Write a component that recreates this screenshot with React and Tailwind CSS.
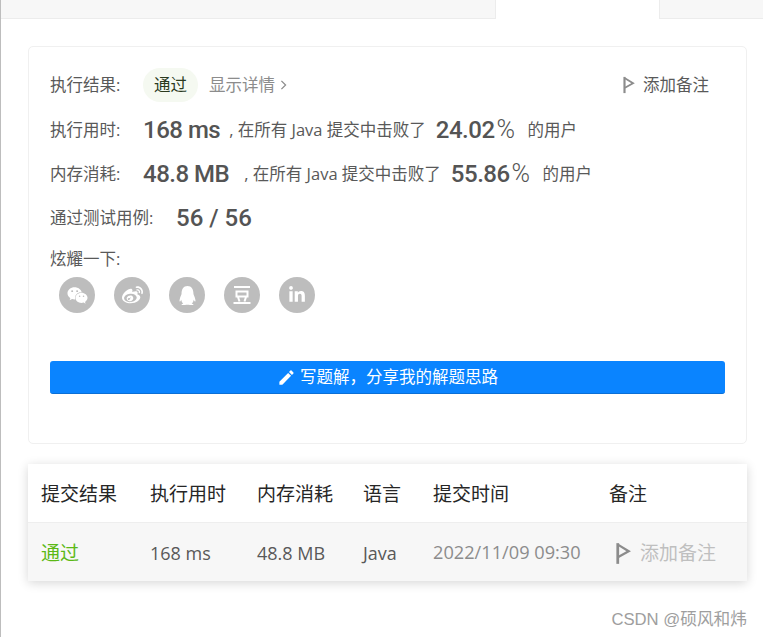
import { FaWeixin, FaWeibo, FaQq, FaLinkedinIn } from 'react-icons/fa';
import { MdEdit } from 'react-icons/md';

const cjk = { fontFamily: '"Open Sans", "Noto Sans CJK SC", sans-serif' };
const din = { fontFamily: 'Roboto, sans-serif' };
const cols = 'grid grid-cols-[109px_107px_106px_70px_176px_1fr]';

function Flag({ className }) {
  return (
    <svg viewBox="0 0 14 20" className={className} fill="none" stroke="currentColor">
      <path d="M2 1v18" strokeWidth="2.4" />
      <path d="M2.5 2.5 L11.5 8 L2.5 13" strokeWidth="2" strokeLinejoin="miter" />
    </svg>
  );
}

function Douban() {
  return (
    <svg viewBox="0 0 20 20" className="w-[20px] h-[20px]" fill="none" stroke="currentColor" strokeWidth="2">
      <path d="M2 2h16M4.500 6.500h11v5h-11zM6 12l1.500 4.500M14 12l-1.500 4.500M1.500 18h17" />
    </svg>
  );
}

function Stat({ label, value, mid, pct, midMl }) {
  return (
    <div className="flex items-center h-[44px] text-[#595959]">
      <span className="w-[93px]">{label}</span>
      <span className="text-[24px] font-medium tracking-[-0.5px] text-[#545454]" style={din}>{value}</span>
      <span className={midMl}>{mid}</span>
      <span className="ml-[10px] text-[24px] font-medium tracking-[-0.5px] text-[#545454]" style={din}>
        {pct}
        <span className="font-light ml-[2px] text-[25px]">%</span>
      </span>
      <span className="ml-[13px]">的用户</span>
    </div>
  );
}

const icons = [
  <FaWeixin key="wx" className="text-[21px]" />,
  <FaWeibo key="wb" className="text-[21px]" />,
  <FaQq key="qq" className="text-[19px]" />,
  <Douban key="db" />,
  <FaLinkedinIn key="li" className="text-[18px]" />,
];

export default function App() {
  return (
    <div className="w-[763px] h-[637px] bg-white border-l border-[#bdbdbd] overflow-hidden" style={cjk}>
      {/* tabs */}
      <div className="flex h-[19px] bg-[#f7f7f7] border-b border-[#ececec]">
        <div className="w-[494px]" />
        <div className="w-[165px] h-[19px] bg-white border-x border-[#ececec]" />
      </div>

      <div className="pl-[27px] pr-[16px] pt-[27px]">
        {/* result card */}
        <div className="h-[398px] border border-[#f0f0f0] rounded-[5px] px-[21px] pt-[21px] text-[16.5px]">
          <div className="flex items-center h-[34px] text-[#595959]">
            <span className="w-[93px]">执行结果:</span>
            <span className="w-[55px] h-[34px] rounded-full bg-[#f5f9f1] flex items-center justify-center text-[#2b3a1e]">通过</span>
            <span className="ml-[11px] text-[#8c8c8c]">显示详情</span>
            <svg viewBox="0 0 8 12" className="ml-[5px] w-[7px] h-[10px] text-[#8c8c8c]" fill="none" stroke="currentColor" strokeWidth="1.500">
              <path d="M1.500 1l5 5-5 5" />
            </svg>
            <span className="ml-auto mr-[16px] flex items-center gap-[7px] text-[#595959]">
              <Flag className="w-[14px] h-[18px] text-[#8c8c8c]" />
              添加备注
            </span>
          </div>
          <div className="h-[6px]" />
          <Stat label="执行用时:" value="168 ms" mid=", 在所有 Java 提交中击败了" pct="24.02" midMl="ml-[9px]" />
          <Stat label="内存消耗:" value="48.8 MB" mid=", 在所有 Java 提交中击败了" pct="55.86" midMl="ml-[15px]" />
          <div className="flex items-center h-[44px] text-[#595959]">
            <span className="w-[126px]">通过测试用例:</span>
            <span className="text-[24px] font-medium text-[#545454]" style={din}>56 / 56</span>
          </div>
          <div className="leading-[22px] mt-[8px] text-[#595959]">炫耀一下:</div>
          <div className="flex gap-[19px] pl-[9px] mt-[7px]">
            {icons.map((icon, i) => (
              <div key={i} className="w-[36px] h-[36px] rounded-full bg-[#bdbdbd] text-white flex items-center justify-center">
                {icon}
              </div>
            ))}
          </div>
          <button className="mt-[48px] w-full h-[33px] rounded-[3px] bg-[#0a84ff] border-b border-[#0a6fd6] text-white flex items-center justify-center gap-[4px]">
            <MdEdit className="text-[19px]" />
            {'写题解\uFF0C分享我的解题思路'}
          </button>
        </div>

        {/* submissions table */}
        <div className="mt-[20px] w-[719px] shadow-[0_2px_10px_rgba(0,0,0,0.16)]">
          <div className={`${cols} h-[59px] items-center bg-white border-b border-[#eeeeee] pl-[13px] pt-[2px] text-[19px] text-[#262626]`}>
            <span>提交结果</span>
            <span>执行用时</span>
            <span>内存消耗</span>
            <span>语言</span>
            <span>提交时间</span>
            <span>备注</span>
          </div>
          <div className={`${cols} h-[58px] items-center bg-[#f7f7f7] pl-[13px] pt-[2px] text-[18px] text-[#595959]`}>
            <span className="text-[#5cb916] text-[19px]">通过</span>
            <span>168 ms</span>
            <span>48.8 MB</span>
            <span>Java</span>
            <span className="text-[#8c8c8c] text-[18.2px]">2022/11/09 09:30</span>
            <span className="flex items-center gap-[8px] pl-[6px] text-[#bfbfbf] text-[19px]">
              <Flag className="w-[17px] h-[23px] text-[#8c8c8c]" />
              添加备注
            </span>
          </div>
        </div>

        <div className="mt-[26px] w-[719px] text-right text-[16.7px] text-[#9e9e9e]" style={{ fontFamily: '"Liberation Sans", "Noto Sans CJK SC", sans-serif' }}>
          CSDN @硕风和炜
        </div>
      </div>
    </div>
  );
}
